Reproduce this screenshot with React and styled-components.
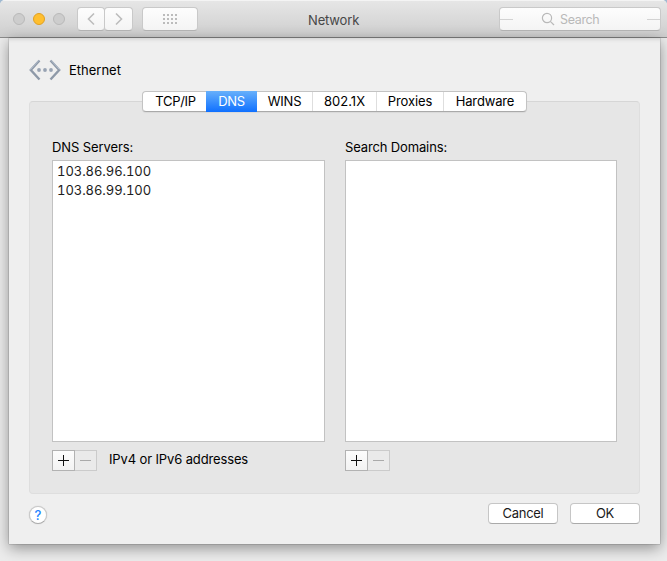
import React from "react";
import styled, { createGlobalStyle } from "styled-components";

const GlobalStyle = createGlobalStyle`
  * { box-sizing: border-box; }
  body { margin: 0; overflow: hidden; background: #9fb9d1; }
  button { padding: 0; margin: 0; font: inherit; color: inherit; }
`;

const Window = styled.main`
  width: 667px;
  height: 561px;
  overflow: hidden;
  border-radius: 5px 5px 0 0;
  background: #ececec;
  font: 13px/16px Inter, "Liberation Sans", sans-serif;
  color: #000;
`;

const Toolbar = styled.header`
  height: 38px;
  display: flex;
  align-items: flex-start;
  padding: 6px 6px 0 13px;
  border-top: 1px solid #f4f4f4;
  border-bottom: 1px solid #8c8c8c;
  background: linear-gradient(#e6e6e6, #cecece);
`;

const Lights = styled.div`
  display: flex;
  gap: 8px;
  margin-top: 6px;
`;

const Light = styled.span`
  width: 12px;
  height: 12px;
  border-radius: 50%;
  border: 1px solid ${(p) => (p.$active ? "#e0a023" : "#b9b9b9")};
  background: ${(p) => (p.$active ? "#ffbf2f" : "#cdcdcd")};
`;

const ToolGroup = styled.div`
  display: flex;
  margin-left: ${(p) => p.$gap}px;
`;

const ToolButton = styled.button`
  display: flex;
  align-items: center;
  justify-content: center;
  width: ${(p) => p.$width}px;
  height: 24px;
  border: 1px solid #c9c9c9;
  border-bottom-color: #b2b2b2;
  border-radius: 4px;
  background: linear-gradient(#fdfdfd, #f4f4f4);
  & + & { margin-left: -1px; }
`;

const Title = styled.h1`
  margin: 5px 0 0 110px;
  width: 60px;
  font-size: 13px;
  font-weight: 400;
  line-height: 16px;
  letter-spacing: -0.15px;
  color: #474747;
`;

const SearchField = styled.div`
  position: relative;
  display: flex;
  align-items: center;
  width: 162px;
  height: 24px;
  margin-left: auto;
  padding-left: 41px;
  border: 1px solid #c9c9c9;
  border-bottom-color: #b2b2b2;
  border-radius: 4px;
  background: linear-gradient(#fdfdfd, #f4f4f4);
  color: #b9b9b9;
  font-size: 12.5px;
  line-height: 18px;
  letter-spacing: -0.35px;
  svg { margin-right: 5px; }
  &::before, &::after {
    content: "";
    position: absolute;
    top: 11px;
    width: 13px;
    height: 1px;
    background: #d3d3d3;
  }
  &::before { left: 0; }
  &::after { right: 0; }
`;

const SearchHint = styled.span`
  padding-top: 1px;
`;

const Backdrop = styled.div`
  height: 523px;
  padding: 0 6px 0 9px;
`;

const Sheet = styled.section`
  width: 651px;
  height: 506px;
  padding: 0 20px;
  background: #efefef;
  box-shadow: 0 0 1px rgba(0, 0, 0, 0.6), 0 4px 14px rgba(0, 0, 0, 0.4),
    inset 0 5px 4px -4px rgba(0, 0, 0, 0.15);
`;

const Service = styled.div`
  display: flex;
  align-items: center;
  height: 53px;
  padding-top: 11px;
  gap: 8px;
`;

const Label = styled.span`
  letter-spacing: ${(p) => p.$spacing || 0}px;
  white-space: nowrap;
`;

const Panel = styled.div`
  height: 393px;
  margin-top: 10px;
  border: 1px solid #dedede;
  border-top-color: #d6d6d6;
  border-radius: 4px;
  background: #e6e6e6;
`;

const Tabs = styled.nav`
  display: flex;
  width: 385px;
  height: 21px;
  margin: -11px 0 0 112px;
  border: 1px solid #c3c3c3;
  border-bottom-color: #a9a9a9;
  border-radius: 4px;
  background: #fff;
  box-shadow: 0 1px 1px rgba(0, 0, 0, 0.06);
`;

const Tab = styled.button`
  width: ${(p) => p.$width}px;
  height: ${(p) => (p.$active ? 21 : 19)}px;
  margin-top: ${(p) => (p.$active ? -1 : 0)}px;
  padding: 0 0 2px ${(p) => p.$inset || 0}px;
  border: 0;
  border-right: ${(p) => (p.$line ? "1px solid #dedede" : "0")};
  background: ${(p) => (p.$active ? "linear-gradient(#67b0fb, #0f70ff)" : "transparent")};
  color: ${(p) => (p.$active ? "#fff" : "#000")};
  letter-spacing: ${(p) => p.$spacing}px;
  white-space: nowrap;
`;

const Lists = styled.div`
  display: flex;
  gap: 20px;
  padding: 27px 22px 0;
`;

const Column = styled.div`
  width: ${(p) => p.$width}px;
`;

const ListBox = styled.div`
  height: 282px;
  margin-top: 5px;
  padding: 1px 4px;
  border: 1px solid #c2c2c2;
  background: #fff;
`;

const Entry = styled.div`
  height: 19px;
  line-height: 19px;
  color: #1d1d1d;
  font-variant-numeric: tabular-nums;
  letter-spacing: -0.05px;
`;

const Actions = styled.div`
  display: flex;
  align-items: center;
  margin-top: 8px;
`;

const SquareButton = styled.button`
  display: flex;
  width: 23px;
  height: 21px;
  align-items: center;
  justify-content: center;
  border: 1px solid ${(p) => (p.$muted ? "#cbcbcb" : "#b2b2b2")};
  background: ${(p) => (p.$muted ? "#eaeaea" : "linear-gradient(#fcfcfc, #f3f3f3)")};
  color: ${(p) => (p.$muted ? "#aaa" : "#111")};
  & + & { border-left: 0; width: 22px; }
`;

const Note = styled(Label)`
  margin: -3px 0 0 12px;
`;

const Footer = styled.footer`
  display: flex;
  align-items: center;
  height: 21px;
  margin-top: 9px;
  gap: 12px;
`;

const Help = styled.button`
  width: 18px;
  height: 18px;
  margin: 2px auto 0 0;
  border: 1px solid #c9c9c9;
  border-bottom-color: #aaa;
  border-radius: 50%;
  background: #fff;
  color: #2384ff;
  font-size: 13px;
  font-weight: 500;
  line-height: 16px;
  box-shadow: 0 0 1px rgba(0, 0, 0, 0.25);
`;

const PushButton = styled.button`
  width: 70px;
  height: 21px;
  padding-bottom: 2px;
  border: 1px solid #c6c6c6;
  border-bottom-color: #aaa;
  border-radius: 4px;
  background: #fff;
  color: #1a1a1a;
  letter-spacing: -0.3px;
`;

const TABS = [
  ["TCP/IP", 63, -0.3, 2],
  ["DNS", 51, -0.4],
  ["WINS", 56, -0.2],
  ["802.1X", 64, 0.05],
  ["Proxies", 67, -0.1],
  ["Hardware", 82, -0.15],
];

const Chevron = ({ right }) => (
  <svg width="9" height="14" fill="none" stroke="#bcbcbc" strokeWidth="1.6">
    <path d={right ? "M2 1.5 7.5 7 2 12.5" : "M7 1.5 1.5 7 7 12.5"} />
  </svg>
);

const Grid = () => (
  <svg width="14" height="10" fill="#bcbcbc">
    {[0, 4, 8].map((y) =>
      [0, 4, 8, 12].map((x) => <rect key={`${x}-${y}`} x={x} y={y} width="2" height="2" />)
    )}
  </svg>
);

const Magnifier = () => (
  <svg width="14" height="14" fill="none" stroke="#b9b9b9" strokeWidth="1.2">
    <circle cx="6" cy="6" r="4.6" />
    <path d="m9.3 9.3 3.7 3.7" />
  </svg>
);

const EthernetIcon = () => (
  <svg width="32" height="22" fill="none">
    <path d="M10.5 1.5 1.8 11l8.7 9.5M21.5 1.5l8.7 9.5-8.7 9.5" stroke="#8e99a8" strokeWidth="2.4" />
    <path d="M10 1.3 1.3 10.7M22 1.3l8.5 9.2" stroke="#b4bfce" strokeWidth="1" />
    <g fill="#98a3b3">
      <circle cx="10" cy="11" r="1.9" />
      <circle cx="16" cy="11" r="1.9" />
      <circle cx="22" cy="11" r="1.9" />
    </g>
  </svg>
);

const AddRemove = () => (
  <>
    <SquareButton aria-label="Add">
      <svg width="11" height="11" stroke="currentColor">
        <path d="M0 5.5h11M5.5 0v11" />
      </svg>
    </SquareButton>
    <SquareButton $muted aria-label="Remove">
      <svg width="11" height="11" stroke="currentColor">
        <path d="M0 5.5h11" />
      </svg>
    </SquareButton>
  </>
);

export default function App() {
  return (
    <>
      <GlobalStyle />
      <Window>
        <Toolbar>
          <Lights>
            <Light />
            <Light $active />
            <Light />
          </Lights>
          <ToolGroup $gap={12}>
            <ToolButton $width={28} aria-label="Back"><Chevron /></ToolButton>
            <ToolButton $width={29} aria-label="Forward"><Chevron right /></ToolButton>
          </ToolGroup>
          <ToolGroup $gap={9}>
            <ToolButton $width={56} aria-label="Show all"><Grid /></ToolButton>
          </ToolGroup>
          <Title>Network</Title>
          <SearchField><Magnifier /><SearchHint>Search</SearchHint></SearchField>
        </Toolbar>
        <Backdrop>
          <Sheet>
            <Service>
              <EthernetIcon />
              <Label>Ethernet</Label>
            </Service>
            <Panel>
              <Tabs>
                {TABS.map(([name, width, spacing, inset], i) => (
                  <Tab key={name} $width={width} $spacing={spacing} $inset={inset} $active={i === 1} $line={i > 1 && i < 5}>
                    {name}
                  </Tab>
                ))}
              </Tabs>
              <Lists>
                <Column $width={273}>
                  <Label $spacing={-0.1}>DNS Servers:</Label>
                  <ListBox>
                    <Entry>103.86.96.100</Entry>
                    <Entry>103.86.99.100</Entry>
                  </ListBox>
                  <Actions>
                    <AddRemove />
                    <Note $spacing={-0.13}>IPv4 or IPv6 addresses</Note>
                  </Actions>
                </Column>
                <Column $width={272}>
                  <Label $spacing={-0.14}>Search Domains:</Label>
                  <ListBox />
                  <Actions><AddRemove /></Actions>
                </Column>
              </Lists>
            </Panel>
            <Footer>
              <Help aria-label="Help">?</Help>
              <PushButton>Cancel</PushButton>
              <PushButton>OK</PushButton>
            </Footer>
          </Sheet>
        </Backdrop>
      </Window>
    </>
  );
}
